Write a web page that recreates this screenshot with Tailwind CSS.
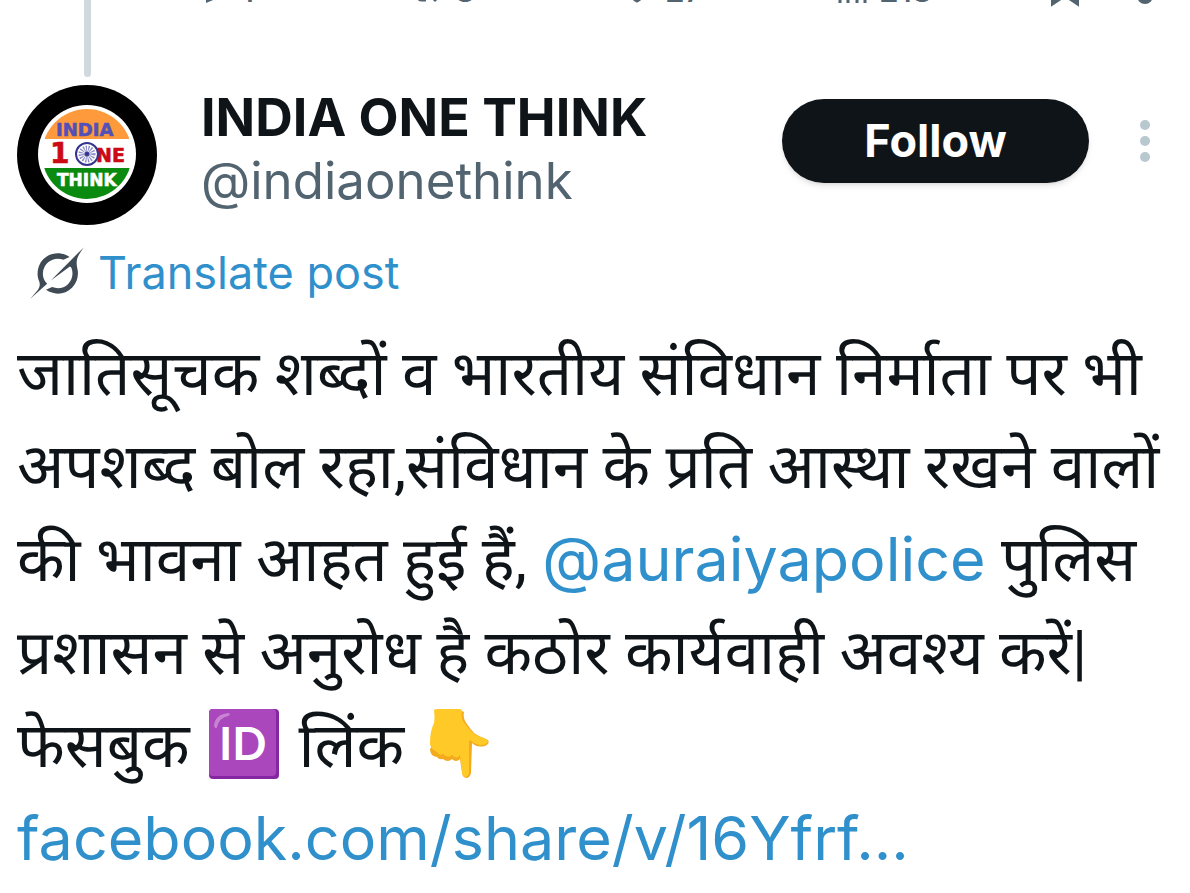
<!DOCTYPE html>
<html lang="hi">
<head>
    <meta charset="UTF-8">
    <meta name="viewport" content="width=device-width, initial-scale=1.0">
    <title>INDIA ONE THINK (@indiaonethink)</title>
    <script src="https://cdn.jsdelivr.net/npm/@tailwindcss/browser@4"></script>
</head>
<body class="bg-white text-[#0f1419] font-['Inter','Noto_Sans',sans-serif] overflow-x-hidden">

    <main class="px-[17px]">

        <!-- Tail of the previous post: thread line and action bar -->
        <div class="flex h-[77px] gap-11 overflow-hidden">
            <div class="flex w-[140px] shrink-0 justify-center">
                <div class="w-[7px] rounded-b-full bg-[#cfd9de]"></div>
            </div>
            <div class="-mt-[31px] mr-1 flex h-11 flex-1 items-center text-[32px] leading-[44px] font-medium text-[#536471]">
                <button class="flex flex-1 items-center gap-2" aria-label="Reply">
                    <svg class="h-11 w-8" viewBox="0 0 32 44" fill="none" stroke="currentColor" stroke-width="4"><path d="M7 31V26C-2 18 2 4 14 4h4c16 0 16 20 1 22Z"/></svg>
                    <span>1</span>
                </button>
                <button class="flex flex-1 items-center gap-3" aria-label="Repost">
                    <svg class="h-11 w-8" viewBox="0 0 32 44" fill="none" stroke="currentColor" stroke-width="3"><path d="M1 14l6-6 6 6M7 9v18q0 4 4 4h4M30 25l-6 6-6-6M24 30V12q0-4-4-4h-4"/></svg>
                    <span>8</span>
                </button>
                <button class="flex flex-1 items-center gap-3" aria-label="Like">
                    <svg class="h-11 w-8" viewBox="0 0 32 44" fill="none" stroke="currentColor" stroke-width="3"><path d="M16 32C-8 17 5-1 16 11 27-1 40 17 16 32Z"/></svg>
                    <span>27</span>
                </button>
                <button class="flex flex-1 items-center gap-2" aria-label="Views">
                    <svg class="h-11 w-10" viewBox="0 0 40 44" fill="none" stroke="currentColor" stroke-width="3"><path d="M9 34V20M17 34V6M26 34V14M34 34V8"/></svg>
                    <span>218</span>
                </button>
                <button class="ml-2 mr-10" aria-label="Bookmark">
                    <svg class="h-11 w-8" viewBox="0 0 32 44" fill="none" stroke="currentColor" stroke-width="4"><path d="M4 34V5h24v29L16 26Z"/></svg>
                </button>
                <button aria-label="Share">
                    <svg class="h-11 w-12" viewBox="0 0 48 44" fill="none" stroke="currentColor" stroke-width="4"><path d="M18 27a6 6 0 1 0 12 0 6 6 0 1 0-12 0M24 21V4"/></svg>
                </button>
            </div>
        </div>

        <!-- Author -->
        <header class="mt-2 flex gap-11">
            <svg class="size-[140px] shrink-0" viewBox="0 0 140 140" role="img" aria-label="INDIA ONE THINK">
                <defs>
                    <clipPath id="badge"><circle cx="70" cy="69" r="45"/></clipPath>
                </defs>
                <circle cx="70" cy="70" r="70" fill="#000"/>
                <circle cx="70" cy="69" r="49" fill="#fff"/>
                <g clip-path="url(#badge)">
                    <path fill="#ff9a3c" d="M20 20h100v34H20z"/>
                    <path fill="#0b8a10" d="M20 83h100v34H20z"/>
                </g>
                <g font-family="DejaVu Sans" font-weight="bold" stroke-width="0.6">
                    <text x="39" y="51" font-size="18" fill="#5350b8" stroke="#5350b8">INDIA</text>
                    <text x="33" y="78" font-size="28" fill="#cc0a14" stroke="#cc0a14">1</text>
                    <text x="79" y="77" font-size="19" fill="#cc0a14" stroke="#cc0a14">NE</text>
                    <text x="40" y="101" font-size="17" fill="#fff" stroke="#fff">THINK</text>
                </g>
                <g fill="none" stroke="#34348f">
                    <circle cx="70" cy="69" r="11" fill="#fff" stroke-width="2"/>
                    <circle cx="70" cy="69" r="5" stroke="#8a8ac8" stroke-width="7" stroke-dasharray="1 1"/>
                    <circle cx="70" cy="69" r="2" fill="#34348f"/>
                </g>
            </svg>
            <div class="min-w-0 flex-1 pt-px">
                <h1 class="whitespace-nowrap text-[52px] leading-[64px] font-bold">INDIA ONE THINK</h1>
                <a href="#" class="block text-[51px] leading-[62px] text-[#536471]">@indiaonethink</a>
            </div>
            <div class="mr-[22px] flex h-28 items-center gap-[50px]">
                <button class="h-[84px] w-[307px] rounded-full bg-[#0f1419] text-[45px] font-bold text-white shadow-md">Follow</button>
                <button aria-label="More">
                    <svg class="h-12 w-3" viewBox="0 0 12 48" fill="#b9c7cf"><circle cx="6" cy="8" r="5"/><circle cx="6" cy="24" r="5"/><circle cx="6" cy="40" r="5"/></svg>
                </button>
            </div>
        </header>

        <!-- Translate -->
        <a href="#" class="mt-4 ml-[13px] flex h-16 items-center gap-[14px] text-[45px] text-[#2f90cc]">
            <svg class="size-[54px] text-[#3f4a54]" viewBox="0 0 24 24" fill="currentColor"><path d="M9.27 15.29l7.978-5.897c.391-.29.95-.177 1.137.272.98 2.369.542 5.215-1.41 7.169-1.951 1.954-4.667 2.382-7.149 1.406l-2.711 1.257c3.889 2.661 8.611 2.003 11.562-.953 2.341-2.344 3.066-5.539 2.388-8.42l.006.007c-.983-4.232.242-5.924 2.75-9.383.06-.082.12-.164.179-.248l-3.301 3.305v-.01L9.267 15.292M7.623 16.723c-2.792-2.67-2.31-6.801.071-9.184 1.761-1.763 4.647-2.483 7.166-1.425l2.705-1.25c-.488-.353-1.112-.733-1.829-.999-3.24-1.335-7.118-.67-9.752 1.966-2.533 2.536-3.33 6.436-1.962 9.764 1.022 2.487-.653 4.246-2.34 6.022-.599.63-1.199 1.259-1.682 1.925l7.62-6.815"/></svg>
            Translate post
        </a>

        <!-- Post text -->
        <p class="mt-[22px] whitespace-nowrap font-['Roboto','Noto_Sans_Devanagari','Noto_Sans',sans-serif] text-[62px] leading-[93px]">
            जातिसूचक शब्दों व भारतीय संविधान निर्माता पर भी<br>
            अपशब्द बोल रहा,संविधान के प्रति आस्था रखने वालों<br>
            की भावना आहत हुई हैं, <a href="#" class="font-['Inter',sans-serif] text-[61px] text-[#2f90cc]">@auraiyapolice</a> पुलिस<br>
            प्रशासन से अनुरोध है कठोर कार्यवाही अवश्य करें|<br>
            फेसबुक
            <svg class="mx-1 inline h-[70px] w-[70px] align-[-12px]" viewBox="0 0 70 70" role="img" aria-label="ID">
                <rect width="70" height="70" rx="4" fill="#8527a3"/>
                <rect width="67" height="67" rx="4" fill="#ab47bc"/>
                <path d="M5 17Q6 5 20 4q2 2-1 3Q10 9 8 18q-1 3-3-1Z" fill="#c883d3"/>
                <text x="10" y="51" font-family="Lato" font-weight="bold" font-size="45" fill="#fff">ID</text>
            </svg>
            लिंक
            <svg class="mx-1 inline h-[70px] w-[70px] align-[-12px]" viewBox="0 0 70 70" role="img" aria-label="👇">
                <path fill="#f5a91c" d="M38 2l2 1q-1 5 1 9 3 5 9 12 4 3 14 7 2 4-3 6-8 2-13-3L47 64q-1 5-5 5-4-1-4-6l-2-13q-4 4-8 0-4 4-9 0-4 1-6-2-7-1-7-8Z"/>
                <path fill="#ffc928" d="M10 2q0-2 3-2h22q3 0 3 2-1 6 1 10 3 5 9 11 4 4 12 6 4 2 4 4-3 4-9 3-5-1-9-5-1 0-1 3l0 30q-1 4-4 4-3-1-3-5l-2-17q-3 5-8 0-4 4-9-1-4 2-6-2-7-3-7-9 0-12 4-20 1-5 0-12Z"/>
            </svg><br>
            <a href="#" class="font-['Inter',sans-serif] text-[61px] text-[#2f90cc]">facebook.com/share/v/16Yfrf...</a>
        </p>

    </main>

</body>
</html>
